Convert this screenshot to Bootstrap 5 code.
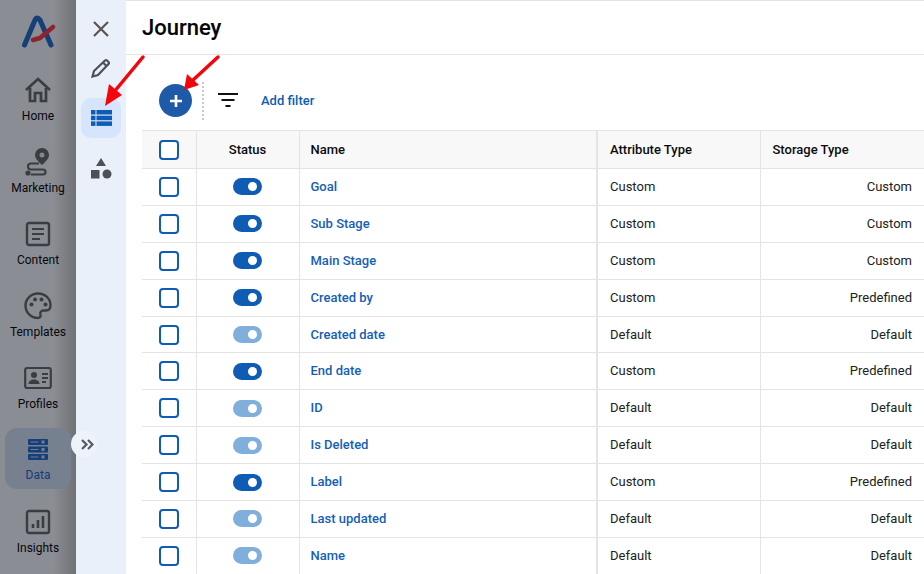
<!DOCTYPE html>
<html lang="en">
<head>
<meta charset="utf-8">
<title>Journey</title>
<link href="https://cdn.jsdelivr.net/npm/bootstrap@5.3.0/dist/css/bootstrap.min.css" rel="stylesheet">
<style>
html,body{height:100%;overflow:hidden;}
body{font-family:Roboto,"Liberation Sans",sans-serif;background:#fff;color:#212121;width:924px;height:574px;position:relative;}
.shell{height:574px;}
.rail{width:76px;flex:none;background:linear-gradient(90deg,#8b8d94 0,#8b8d94 70%,#6f7175 100%);padding-top:14px;}
.logo-wrap{height:60px;flex:none;}
.rail-item{width:66px;height:72px;padding-top:2px;font-size:12px;line-height:14px;color:#05070b;border-radius:12px;flex:none;}
.ic{height:28px;margin-bottom:5px;flex:none;}
.rail-item.on{background:#76808f;color:#143c76;height:61px;padding-top:10px;margin:-6px 0 17px;}
.rail-item.on .ic{height:23px;margin-bottom:7px;}
.sub{width:50px;flex:none;background:#eaf0fa;padding-top:10px;}
.sub-btn{width:40px;height:40px;border-radius:10px;flex:none;}
.sub-btn.first{height:38px;}
.sub-btn.on{background:#d6e5fb;margin:10px 0;}
.main{min-width:0;border-top:1px solid #dfe5e8;}
.head{height:54px;border-bottom:1px solid #e4e4e4;padding:0 16px;}
.head h1{font-size:22px;font-weight:500;margin:0;color:#050505;line-height:53px;-webkit-text-stroke:.1px #050505;}
.tools{height:75px;padding:29px 0 0 33px;}
.add-btn{width:33px;height:33px;border-radius:50%;background:#1e5aa8;border:0;padding:0;flex:none;}
.vdiv{height:38px;border-left:2px dotted #c8c8c8;margin:-2px 13px 0 10px;}
.flt{margin-top:8px;}
.add-link{font-size:13px;line-height:20px;font-weight:500;color:#0e5cb3;text-decoration:none;margin:7px 0 0 22px;}
.wrap{padding-left:16px;}
.grid-t{table-layout:fixed;width:782px;border-collapse:collapse;margin:0;font-size:13px;}
.grid-t th,.grid-t td{border:1px solid #e4e4e4;padding:0 12px 0 11px;height:36.9px;vertical-align:middle;line-height:14px;color:#212121;background:#fff;}
.grid-t tr>:first-child{border-left:0;padding-left:13px;padding-right:12px;}
.grid-t tr>:nth-child(n+4){padding-left:12px;}
.grid-t tr>:last-child{border-right:0;}
.grid-t th{background:#f8f8f8;height:38px;font-weight:500;color:#0b0b0b;}
.grid-t th.stat{padding-left:12px;}
.grid-t .sep{border-right:2px solid #e4e4e4;}
.grid-t td.nm{font-weight:500;color:#1560b5;}
.box{display:block;width:20px;height:20px;border:2px solid #0e5cb3;border-radius:4px;margin:0 auto;background:#fff;}
.tog{display:block;width:29px;height:17px;border-radius:9px;background:#0e5cb3;margin:0 auto;position:relative;}
.tog::after{content:"";position:absolute;right:5px;top:4px;width:9px;height:9px;border-radius:50%;background:#fff;}
.tog.off{background:#80afdc;}
.expand{position:absolute;left:71px;top:431px;width:26px;height:26px;border-radius:50%;background:#eef3fb;padding-left:6px;}
.arrows{position:absolute;left:0;top:0;pointer-events:none;}
</style>
</head>
<body>
<div class="d-flex shell">
  <nav class="rail d-flex flex-column align-items-center">
    <div class="logo-wrap">
      <svg width="36" height="36" viewBox="0 0 36 36"><path d="M4.500 31 L15 6 Q17 2 20 6 L31 31" fill="none" stroke="#143f78" stroke-width="5" stroke-linecap="round" stroke-linejoin="round"/><path d="M13 26 L20 24 L33 13" fill="none" stroke="#8e2330" stroke-width="4.500" stroke-linecap="round" stroke-linejoin="round"/></svg>
    </div>
    <div class="rail-item d-flex flex-column align-items-center">
      <svg class="ic" width="28" height="28" viewBox="0 0 28 28" fill="none" stroke="#3a3d42" stroke-width="2.700"><path d="M2 14 L14 3 L26 14"/><path d="M6 12 V25 H11 V17 H17 V25 H22 V12"/></svg>
      <span>Home</span>
    </div>
    <div class="rail-item d-flex flex-column align-items-center">
      <svg class="ic" width="28" height="28" viewBox="0 0 28 28"><path d="M18 0 a7 7 0 0 1 7 7 c0 4 -5 8 -7 10 c-2 -2 -7 -6 -7 -10 a7 7 0 0 1 7 -7z" fill="#3a3d42"/><circle cx="18" cy="7" r="2.500" fill="#85878d"/><path d="M15 15.500 H7 a3 3 0 0 0 0 6 H19 a2.500 2.500 0 0 1 0 5 H7" fill="none" stroke="#3a3d42" stroke-width="2.200"/><circle cx="4" cy="25" r="2.600" fill="#3a3d42"/></svg>
      <span>Marketing</span>
    </div>
    <div class="rail-item d-flex flex-column align-items-center">
      <svg class="ic" width="26" height="28" viewBox="0 0 26 28" fill="none" stroke="#3a3d42"><rect x="2" y="3" width="22" height="22" rx="2" stroke-width="2.400"/><path d="M7 9 H19 M7 14 H19 M7 19 H15" stroke-width="2.200"/></svg>
      <span>Content</span>
    </div>
    <div class="rail-item d-flex flex-column align-items-center">
      <svg class="ic" width="28" height="28" viewBox="0 0 28 28"><path d="M14 1.500 C7 1.500 1.500 7 1.500 13.500 C1.500 20.500 7 26 14 26 C16 26 17 24.500 16.500 23 C15.500 20.500 17 18.500 19.500 18.500 H22 C24.800 18.500 26.500 16.500 26.500 13 C26.500 6.500 21 1.500 14 1.500Z" fill="none" stroke="#3a3d42" stroke-width="2.400"/><circle cx="7.500" cy="12.500" r="2" fill="#3a3d42"/><circle cx="11" cy="7.500" r="2" fill="#3a3d42"/><circle cx="17.500" cy="7.500" r="2" fill="#3a3d42"/><circle cx="21.500" cy="12.500" r="2" fill="#3a3d42"/></svg>
      <span>Templates</span>
    </div>
    <div class="rail-item d-flex flex-column align-items-center">
      <svg class="ic" width="28" height="28" viewBox="0 0 28 28"><rect x="1.200" y="4" width="25.600" height="20" rx="2" fill="none" stroke="#3a3d42" stroke-width="2.200"/><circle cx="10" cy="11" r="3" fill="#3a3d42"/><path d="M4.500 20 c0 -3 2.500 -4.500 5.500 -4.500 s5.500 1.500 5.500 4.500z" fill="#3a3d42"/><path d="M18 10 H24 M18 14 H24 M18 18 H22" stroke="#3a3d42" stroke-width="1.800"/></svg>
      <span>Profiles</span>
    </div>
    <div class="rail-item on d-flex flex-column align-items-center">
      <svg class="ic" width="22" height="23" viewBox="0 0 22 23"><g fill="#143f78"><rect x="1" y="1" width="20" height="6" rx="1"/><rect x="1" y="8.500" width="20" height="6" rx="1"/><rect x="1" y="16" width="20" height="6" rx="1"/></g><g fill="#76808f"><rect x="3.500" y="3.500" width="8" height="1"/><rect x="3.500" y="11" width="8" height="1"/><rect x="3.500" y="18.500" width="8" height="1"/><rect x="14.500" y="2.500" width="3" height="3"/><rect x="14.500" y="10" width="3" height="3"/><rect x="14.500" y="17.500" width="3" height="3"/></g></svg>
      <span>Data</span>
    </div>
    <div class="rail-item d-flex flex-column align-items-center">
      <svg class="ic" width="26" height="28" viewBox="0 0 26 28" fill="none" stroke="#3a3d42"><rect x="2" y="3" width="22" height="22" rx="2" stroke-width="2.400"/><path d="M8 20 V16 M13 20 V12 M18 20 V8" stroke-width="2.600"/></svg>
      <span>Insights</span>
    </div>
  </nav>
  <aside class="sub d-flex flex-column align-items-center">
    <div class="sub-btn first d-flex align-items-center justify-content-center">
      <svg width="18" height="18" viewBox="0 0 18 18"><path d="M2 2 L16 16 M16 2 L2 16" stroke="#5b5252" stroke-width="2.200"/></svg>
    </div>
    <div class="sub-btn d-flex align-items-center justify-content-center">
      <svg width="20" height="20" viewBox="0 0 20 20" fill="none" stroke="#4d5055" stroke-width="2.200"><path d="M1.500 18.500 L3 13 L14 2.500 Q15 1.500 16 2.500 L17.500 4 Q18.500 5 17.500 6 L7 17 Z"/><path d="M12 4.500 L15.500 8"/></svg>
    </div>
    <div class="sub-btn on d-flex align-items-center justify-content-center">
      <svg width="21" height="16" viewBox="0 0 21 16"><g fill="#0e5cb3"><rect x="0" y="0" width="4.500" height="4.500"/><rect x="5.500" y="0" width="15.500" height="4.500"/><rect x="0" y="5.700" width="4.500" height="4.500"/><rect x="5.500" y="5.700" width="15.500" height="4.500"/><rect x="0" y="11.400" width="4.500" height="4.500"/><rect x="5.500" y="11.400" width="15.500" height="4.500"/></g></svg>
    </div>
    <div class="sub-btn d-flex align-items-center justify-content-center">
      <svg width="21" height="21" viewBox="0 0 21 21"><g fill="#4d5055"><path d="M10 0 L15 8 H5 Z"/><rect x="0" y="12" width="8.500" height="8.500"/><circle cx="16" cy="16" r="4.500"/></g></svg>
    </div>
  </aside>
  <main class="main flex-grow-1">
    <header class="head d-flex align-items-center"><h1>Journey</h1></header>
    <div class="tools d-flex align-items-start">
      <button class="add-btn d-flex align-items-center justify-content-center" aria-label="Add">
        <svg width="14" height="14" viewBox="0 0 14 14"><path d="M7 1 V13 M1 7 H13" stroke="#fff" stroke-width="2.600"/></svg>
      </button>
      <div class="vdiv"></div>
      <svg class="flt" width="22" height="16" viewBox="0 0 22 16"><path d="M1 2 H21 M4.500 8 H17.500 M8.500 14 H13.500" stroke="#111" stroke-width="1.800"/></svg>
      <a class="add-link" href="#">Add filter</a>
    </div>
    <div class="wrap">
      <table class="grid-t">
        <colgroup><col style="width:54px"><col style="width:103px"><col style="width:298px"><col style="width:163px"><col style="width:164px"></colgroup>
        <thead><tr><th><span class="box"></span></th><th class="text-center stat">Status</th><th class="sep">Name</th><th>Attribute Type</th><th>Storage Type</th></tr></thead>
        <tbody>
          <tr><td><span class="box"></span></td><td><span class="tog"></span></td><td class="nm sep">Goal</td><td>Custom</td><td class="text-end">Custom</td></tr>
          <tr><td><span class="box"></span></td><td><span class="tog"></span></td><td class="nm sep">Sub Stage</td><td>Custom</td><td class="text-end">Custom</td></tr>
          <tr><td><span class="box"></span></td><td><span class="tog"></span></td><td class="nm sep">Main Stage</td><td>Custom</td><td class="text-end">Custom</td></tr>
          <tr><td><span class="box"></span></td><td><span class="tog"></span></td><td class="nm sep">Created by</td><td>Custom</td><td class="text-end">Predefined</td></tr>
          <tr><td><span class="box"></span></td><td><span class="tog off"></span></td><td class="nm sep">Created date</td><td>Default</td><td class="text-end">Default</td></tr>
          <tr><td><span class="box"></span></td><td><span class="tog"></span></td><td class="nm sep">End date</td><td>Custom</td><td class="text-end">Predefined</td></tr>
          <tr><td><span class="box"></span></td><td><span class="tog off"></span></td><td class="nm sep">ID</td><td>Default</td><td class="text-end">Default</td></tr>
          <tr><td><span class="box"></span></td><td><span class="tog off"></span></td><td class="nm sep">Is Deleted</td><td>Default</td><td class="text-end">Default</td></tr>
          <tr><td><span class="box"></span></td><td><span class="tog"></span></td><td class="nm sep">Label</td><td>Custom</td><td class="text-end">Predefined</td></tr>
          <tr><td><span class="box"></span></td><td><span class="tog off"></span></td><td class="nm sep">Last updated</td><td>Default</td><td class="text-end">Default</td></tr>
          <tr><td><span class="box"></span></td><td><span class="tog off"></span></td><td class="nm sep">Name</td><td>Default</td><td class="text-end">Default</td></tr>
        </tbody>
      </table>
    </div>
  </main>
</div>
<div class="expand d-flex align-items-center justify-content-center">
  <svg width="13" height="11" viewBox="0 0 13 11" fill="none" stroke="#55585d" stroke-width="2.200"><path d="M1 1 L5.500 5.500 L1 10 M7 1 L11.500 5.500 L7 10"/></svg>
</div>
<svg class="arrows" width="924" height="574" viewBox="0 0 924 574">
  <g stroke="#f4050b" stroke-width="3.500" stroke-linecap="round" fill="none">
    <path d="M143 57 L114 92"/>
    <path d="M218 57 L192 81"/>
  </g>
  <path d="M105 106 L109 84 L122 95Z" fill="#f4050b"/>
  <path d="M184 90 L187 74 L199 85Z" fill="#f4050b"/>
</svg>
<script src="https://cdn.jsdelivr.net/npm/bootstrap@5.3.0/dist/js/bootstrap.bundle.min.js"></script>
</body>
</html>
